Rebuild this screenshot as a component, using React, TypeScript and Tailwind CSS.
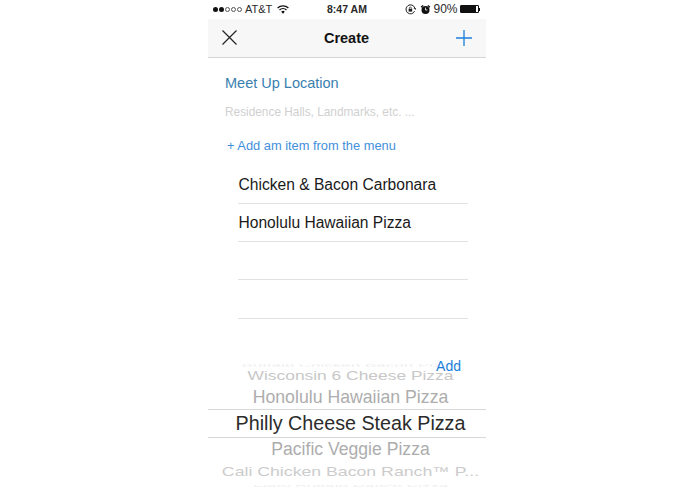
const font = "[font-family:'Liberation_Sans',Arial,sans-serif]";

function Signal() {
    return (
        <div className="flex items-center gap-px">
            {[0, 1].map((i) => (
                <span key={i} className="w-[5px] h-[5px] rounded-full bg-[#111]" />
            ))}
            {[0, 1, 2].map((i) => (
                <span key={i} className="w-[5px] h-[5px] rounded-full border border-[#555]" />
            ))}
        </div>
    );
}

function Wifi() {
    return (
        <svg width="12" height="9" viewBox="0 0 12 9" fill="none" stroke="#111" strokeWidth="1.3">
            <path d="M.6 3A7.8 7.8 0 0 1 11.4 3" />
            <path d="M2.5 5A5 5 0 0 1 9.5 5" />
            <path d="M6 8.8 4.2 6.7a2.6 2.6 0 0 1 3.6 0Z" fill="#111" stroke="none" />
        </svg>
    );
}

function RotationLock() {
    return (
        <svg width="11" height="11" viewBox="0 0 11 11" fill="none">
            <path d="M9.6 7.2A4.5 4.5 0 1 1 9.8 4" stroke="#222" strokeWidth="1" />
            <path d="M8.4 4h2.4v1.9Z" fill="#222" />
            <rect x="3.6" y="4.8" width="3.6" height="2.8" fill="#222" />
            <path d="M4.4 4.8V4a1 1 0 0 1 2 0v.8" stroke="#222" strokeWidth=".7" />
        </svg>
    );
}

function Alarm() {
    return (
        <svg width="11" height="11" viewBox="0 0 11 11">
            <circle cx="5.5" cy="6" r="4" fill="#111" />
            <path d="M.6 2.8 2.6.9 3.6 1.8 1.5 3.8ZM10.4 2.8 8.4.9 7.4 1.8 9.5 3.8Z" fill="#111" />
            <path d="M5.5 3.6V6H7.4" stroke="#fff" strokeWidth=".8" fill="none" />
        </svg>
    );
}

function Battery() {
    return (
        <div className="flex items-center">
            <div className="w-[19px] h-[8px] border border-[#111] bg-[#111] rounded-[1px] flex justify-end">
                <span className="w-[2px] h-full bg-white" />
            </div>
            <span className="w-[1.5px] h-[3px] bg-[#111]" />
        </div>
    );
}

function StatusBar() {
    return (
        <div className="h-[19px] relative flex items-center justify-between pl-[5px] pr-[6px] text-[11px] text-[#2a2a2a]">
            <div className="flex items-center gap-[3px]">
                <Signal />
                <span>AT&amp;T</span>
                <span className="ml-[2px]">
                    <Wifi />
                </span>
            </div>
            <span className="absolute left-[119px] font-semibold text-[10.5px]">8:47 AM</span>
            <div className="flex items-center">
                <RotationLock />
                <span className="ml-[4px]">
                    <Alarm />
                </span>
                <span className="ml-[2px] mr-[2px] text-[12px]">90%</span>
                <Battery />
            </div>
        </div>
    );
}

function NavBar() {
    return (
        <div className="h-[39px] bg-[#f7f7f7] border-b border-[#d6d6d6] flex items-center justify-between pl-[14px] pr-[14px]">
            <svg width="15" height="15" viewBox="0 0 15 15" stroke="#222" strokeWidth="1.2">
                <path d="M.5.5 14.5 14.5M14.5.5.5 14.5" />
            </svg>
            <span className="pt-[2px] text-[14.5px] font-bold text-[#111]">Create</span>
            <svg width="16" height="16" viewBox="0 0 16 16" stroke="#1b7fdb" strokeWidth="1.3">
                <path d="M8 0V16M0 8H16" />
            </svg>
        </div>
    );
}

function Row({ label }: { label?: string }) {
    return (
        <div className="h-[38.4px] pl-[0.5px] pt-[1px] border-b border-[#e2e2e2] flex items-center text-[15.6px] text-[#1a1a1a]">
            {label}
        </div>
    );
}

export default function App() {
    return (
        <div className={`${font} w-[695px] h-[494px] bg-white overflow-hidden flex justify-center`}>
            <div className="w-[278px] ml-[-1px] flex flex-col">
                <StatusBar />
                <NavBar />

                <div className="pl-[17px] pt-[16px] text-[14.5px] leading-[18px] text-[#3a7fb0]">Meet Up Location</div>
                <div className="pl-[17px] pt-[12px] text-[11.85px] leading-[16px] text-[#d0d0d0]">
                    Residence Halls, Landmarks, etc. ...
                </div>
                <div className="pl-[19px] pt-[18px] text-[12.85px] leading-[16px] text-[#3f8fdc]">
                    + Add am item from the menu
                </div>

                <div className="ml-[30px] mr-[18px] mt-[11.5px]">
                    <Row label="Chicken & Bacon Carbonara" />
                    <Row label="Honolulu Hawaiian Pizza" />
                    <Row />
                    <Row />
                </div>

                <div className="relative mt-[40px] h-[136px]">
                    <span className="absolute z-10 right-[25px] top-[-1px] text-[14px] leading-[16px] text-[#1b7fdb]">Add</span>
                    <div className="pt-[2px] pl-[7px] flex flex-col items-center whitespace-nowrap">
                        <div className="h-[9px] overflow-hidden text-[17px] leading-[9px] scale-y-[0.3] text-[#eeeeee]">
                            Buffalo Chicken Bacon Pizza
                        </div>
                        <div className="h-[13px] flex items-center text-[17.4px] scale-y-[0.72] text-[#c8c8c8]">
                            Wisconsin 6 Cheese Pizza
                        </div>
                        <div className="h-[23px] mt-[3px] flex items-center text-[17.7px] text-[#adadad]">
                            Honolulu Hawaiian Pizza
                        </div>
                    </div>
                    <div className="h-[29px] pl-[7px] pt-[2px] border-y border-[#d8d8d8] flex items-center justify-center text-[19.7px] text-[#2b2b2b] whitespace-nowrap">
                        Philly Cheese Steak Pizza
                    </div>
                    <div className="pl-[7px] flex flex-col items-center whitespace-nowrap">
                        <div className="h-[22px] flex items-center text-[17.6px] text-[#adadad]">
                            Pacific Veggie Pizza
                        </div>
                        <div className="h-[18px] mt-[3px] flex items-center text-[17.7px] scale-y-[0.72] text-[#cccccc]">
                            Cali Chicken Bacon Ranch™ P...
                        </div>
                        <div className="h-[6px] mt-[2px] overflow-hidden text-[17px] leading-[6px] scale-y-[0.3] text-[#eeeeee]">
                            Fiery Buffalo Ranch Pizza
                        </div>
                    </div>
                </div>
            </div>
        </div>
    );
}
